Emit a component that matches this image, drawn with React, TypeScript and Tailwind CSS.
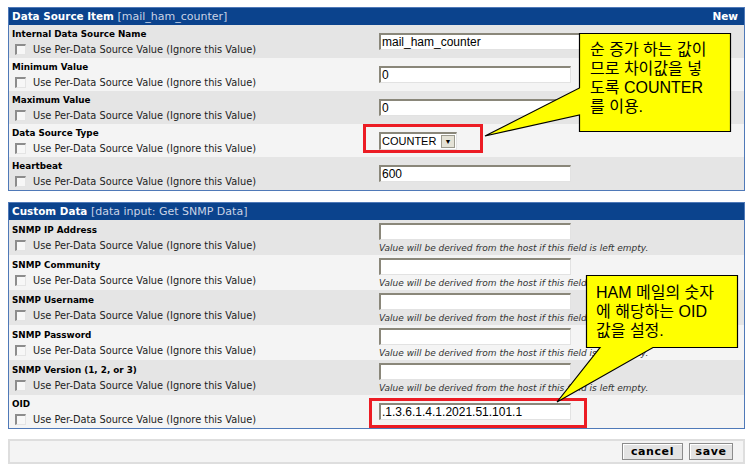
import React from "react";

const checkLabel = "Use Per-Data Source Value (Ignore this Value)";
const hint = "Value will be derived from the host if this field is left empty.";

const Check = () => (
  <span className="inline-block w-[11px] h-[11px] bg-[#f7f7f7] border-t-2 border-l-2 border-t-[#8c8c8c] border-l-[#8c8c8c] border-b border-r border-b-[#e4e4e4] border-r-[#e4e4e4]" />
);

const TextBox = ({ value = "", wide = false }: { value?: string; wide?: boolean }) => (
  <div
    className={`h-[17px] bg-white border-t-2 border-l-2 border-t-[#8a877a] border-l-[#8a877a] border-b border-r border-b-[#e2e2e2] border-r-[#e2e2e2] pl-[1px] text-[12px] leading-[14px] text-black font-['Liberation_Sans',Arial,sans-serif] ${
      wide ? "w-[252px]" : "w-[192px]"
    }`}
  >
    {value}
  </div>
);

const Select = ({ value }: { value: string }) => (
  <div className="flex items-center justify-between w-[78px] h-[18px] bg-white border-t-2 border-l-2 border-t-[#8a877a] border-l-[#8a877a] border-b border-r border-b-[#e2e2e2] border-r-[#e2e2e2] pl-[1px] pr-[1px]">
    <span className="text-[11px] leading-[14px] text-black font-['Liberation_Sans',Arial,sans-serif]">{value}</span>
    <span className="flex items-center justify-center w-[14px] h-[13px] bg-[#e4e2d6] border border-[#9c9a8e] text-[7px] leading-none text-black">
      ▼
    </span>
  </div>
);

type Row = { label: string; value?: string; wide?: boolean; select?: boolean };

const LeftCell = ({ label }: { label: string }) => (
  <div className="w-[367px] pl-[3px] flex flex-col justify-center">
    <div className="text-[8.8px] leading-[13px] font-bold text-black font-['DejaVu_Sans',Verdana,sans-serif]">{label}</div>
    <div className="flex items-center mt-[3px] pl-[3px]">
      <Check />
      <span className="ml-[7px] text-[9.8px] leading-[12px] text-[#222] font-['DejaVu_Sans',Verdana,sans-serif] whitespace-nowrap">{checkLabel}</span>
    </div>
  </div>
);

const Header = ({ title, sub, right }: { title: string; sub: string; right?: string }) => (
  <div className="h-[17px] bg-[#0b438d] flex items-center justify-between px-[3px]">
    <div className="text-[11px] leading-none font-['DejaVu_Sans',Verdana,sans-serif] whitespace-nowrap">
      <span className="font-bold text-white text-[10.4px]">{title}</span>{" "}
      <span className="text-[#c9d3e6]">{sub}</span>
    </div>
    {right && (
      <span className="text-[10.5px] leading-none font-bold text-white font-['DejaVu_Sans',Verdana,sans-serif] pr-[3px]">{right}</span>
    )}
  </div>
);

const itemRows: Row[] = [
  { label: "Internal Data Source Name", value: "mail_ham_counter", wide: true },
  { label: "Minimum Value", value: "0" },
  { label: "Maximum Value", value: "0" },
  { label: "Data Source Type", select: true, value: "COUNTER" },
  { label: "Heartbeat", value: "600" },
];

const customRows: Row[] = [
  { label: "SNMP IP Address" },
  { label: "SNMP Community" },
  { label: "SNMP Username" },
  { label: "SNMP Password" },
  { label: "SNMP Version (1, 2, or 3)" },
  { label: "OID", value: ".1.3.6.1.4.1.2021.51.101.1" },
];

export default function App() {
  return (
    <div className="relative w-[754px] h-[475px] bg-white overflow-hidden pt-[7px] pl-[8px]">
      {/* data source item */}
      <div className="w-[737px] border border-[#4f79b8]">
        <Header title="Data Source Item" sub="[mail_ham_counter]" right="New" />
        {itemRows.map((r, i) => (
          <div key={r.label} className={`flex h-[33px] ${i % 2 === 0 ? "bg-[#e5e5e5]" : "bg-[#f4f4f4]"}`}>
            <LeftCell label={r.label} />
            <div className="flex items-center pl-[3px]">
              {r.select ? <Select value={r.value || ""} /> : <TextBox value={r.value} wide={r.wide} />}
            </div>
          </div>
        ))}
      </div>

      {/* custom data */}
      <div className="w-[737px] mt-[11px] border border-[#4f79b8]">
        <Header title="Custom Data" sub="[data input: Get SNMP Data]" />
        {customRows.map((r, i) => (
          <div
            key={r.label}
            className={`flex ${i === customRows.length - 1 ? "h-[33px]" : "h-[35px]"} ${
              i % 2 === 0 ? "bg-[#e5e5e5]" : "bg-[#f4f4f4]"
            }`}
          >
            <LeftCell label={r.label} />
            <div className="flex flex-col justify-center pl-[3px]">
              <TextBox value={r.value} />
              {r.value === undefined && (
                <div className="mt-[3px] text-[9px] leading-[10px] italic text-[#333] font-['DejaVu_Sans',Verdana,sans-serif] whitespace-nowrap">
                  {hint}
                </div>
              )}
            </div>
          </div>
        ))}
      </div>

      {/* buttons */}
      <div className="w-[737px] mt-[10px] h-[25px] bg-[#f4f4f4] border-2 border-[#dedede] flex items-center justify-end gap-[6px] pr-[10px]">
        <button className="w-[61px] h-[17px] bg-[#e3e3e3] border border-[#8c8c8c] shadow-[inset_1px_1px_0_#ffffff] text-[11px] leading-none font-bold text-black font-['DejaVu_Sans',Verdana,sans-serif] tracking-[0.6px]">
          cancel
        </button>
        <button className="w-[44px] h-[17px] bg-[#e3e3e3] border border-[#8c8c8c] shadow-[inset_1px_1px_0_#ffffff] text-[11px] leading-none font-bold text-black font-['DejaVu_Sans',Verdana,sans-serif] tracking-[0.6px]">
          save
        </button>
      </div>

      {/* red highlight boxes */}
      <div className="absolute left-[363px] top-[124px] w-[120px] h-[29px] border-[3px] border-[#ec1c24]" />
      <div className="absolute left-[369px] top-[398px] w-[218px] h-[30px] border-[3px] border-[#ec1c24]" />

      {/* callouts */}
      <svg className="absolute left-0 top-0 pointer-events-none" width="754" height="475" viewBox="0 0 754 475">
        <path d="M579.5,33.5 H730.5 V131.5 H579.5 V115 L485,136 L579.5,88 Z" fill="#ffff00" stroke="#000" strokeWidth="1.2" />
        <path d="M586.5,275.5 H737.5 V347.5 H653 L557,402 L600,347.5 H586.5 Z" fill="#ffff00" stroke="#000" strokeWidth="1.2" />
      </svg>
      <div className="absolute left-[590px] top-[40px] text-[16px] leading-[19px] text-black font-['Liberation_Sans','Noto_Sans_CJK_KR',sans-serif]">
        <div>순 증가 하는 값이</div>
        <div>므로 차이값을 넣</div>
        <div>도록 COUNTER</div>
        <div>를 이용.</div>
      </div>
      <div className="absolute left-[596px] top-[283px] text-[16px] leading-[19px] text-black font-['Liberation_Sans','Noto_Sans_CJK_KR',sans-serif]">
        <div>HAM 메일의 숫자</div>
        <div>에 해당하는 OID</div>
        <div>값을 설정.</div>
      </div>
    </div>
  );
}
